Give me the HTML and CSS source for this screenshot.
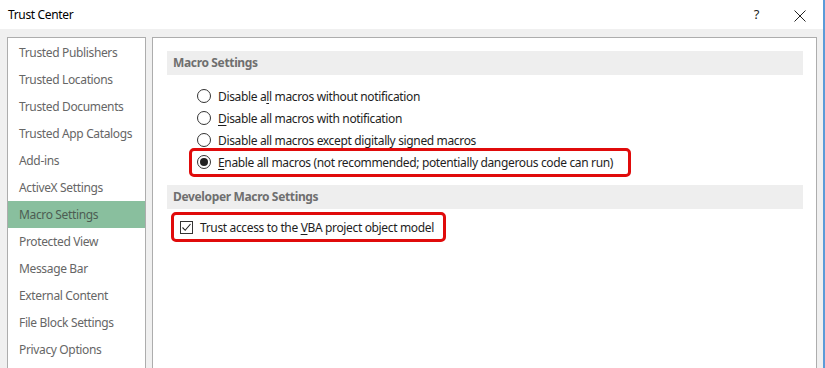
FILE: index.html
```html
<!DOCTYPE html>
<html lang="en">
<head>
<meta charset="utf-8">
<title>Trust Center</title>
<link rel="stylesheet" href="styles.css">
</head>
<body>
<div class="window">
  <div class="titlebar">
    <span class="title">Trust Center</span>
    <div class="title-actions">
      <span class="help">?</span>
      <svg class="close" width="12" height="12" viewBox="0 0 12 12"><path d="M0.5 0.5 L11.5 11.5 M11.5 0.5 L0.5 11.5" stroke="#222" stroke-width="1" fill="none"/></svg>
    </div>
  </div>
  <div class="content">
    <ul class="nav">
      <li>Trusted Publishers</li>
      <li>Trusted Locations</li>
      <li>Trusted Documents</li>
      <li>Trusted App Catalogs</li>
      <li>Add-ins</li>
      <li>ActiveX Settings</li>
      <li class="active">Macro Settings</li>
      <li>Protected View</li>
      <li>Message Bar</li>
      <li>External Content</li>
      <li>File Block Settings</li>
      <li>Privacy Options</li>
    </ul>
    <div class="main">
      <div class="section-head">Macro Settings</div>
      <div class="options">
        <div class="opt"><span class="radio"></span><span>Disable a<u>l</u>l macros without notification</span></div>
        <div class="opt"><span class="radio"></span><span><u>D</u>isable all macros with notification</span></div>
        <div class="opt"><span class="radio"></span><span>Disable all macros except di<u>g</u>itally signed macros</span></div>
        <div class="opt highlight hl-radio"><span class="radio checked"></span><span><u>E</u>nable all macros (not recommended; potentially dangerous code can run)</span></div>
      </div>
      <div class="section-head dev">Developer Macro Settings</div>
      <div class="options check-opts">
        <div class="opt highlight hl-check"><span class="checkbox"><svg width="11" height="11" viewBox="0 0 11 11"><path d="M1.5 5.5 L4.2 8.3 L9.5 2" stroke="#222" stroke-width="1.1" fill="none"/></svg></span><span>Trust access to the <u>V</u>BA project object model</span></div>
      </div>
    </div>
  </div>
</div>
</body>
</html>
```

FILE: styles.css
```css
* { box-sizing: border-box; }
html, body { margin: 0; padding: 0; }
body {
  width: 825px;
  height: 368px;
  overflow: hidden;
  font-family: "Noto Sans", "Open Sans", sans-serif;
  font-size: 12px;
  letter-spacing: -0.35px;
  color: #1e1e1e;
  background: #f0f0f0;
}
.window {
  width: 825px;
  height: 368px;
  display: flex;
  flex-direction: column;
  border-right: 2px solid #5b9bd8;
  background: #f0f0f0;
}
.titlebar {
  height: 29px;
  flex: none;
  background: #ffffff;
  display: flex;
  align-items: center;
  justify-content: space-between;
  padding-left: 8px;
}
.title { color: #000; font-size: 12px; }
.title-actions {
  display: flex;
  align-items: center;
  gap: 35px;
  padding-right: 17px;
}
.help { font-size: 13px; color: #222; margin-top: -2px; }
.close { display: block; margin-top: 2px; }
.content {
  flex: 1;
  display: flex;
  gap: 6px;
  padding: 8px 6px 0 7px;
  min-height: 0;
}
.nav {
  list-style: none;
  margin: 0;
  padding: 1px 0 0 0;
  width: 139px;
  flex: none;
  background: #fff;
  border: 1px solid #adadad;
  border-bottom: none;
}
.nav li {
  height: 27px;
  line-height: 27px;
  padding-left: 11px;
  color: #666666;
  white-space: nowrap;
}
.nav li.active { background: #89bf9e; color: #4d5d53; }
.main {
  flex: 1;
  background: #fff;
  border: 1px solid #adadad;
  border-bottom: none;
  padding: 13px 13px 0 14px;
}
.section-head {
  height: 24px;
  line-height: 24px;
  background: #eeeeee;
  padding-left: 6px;
  font-weight: bold;
  color: #6f6f6f;
}
.section-head.dev { margin-top: 12px; }
.options {
  margin-top: 10px;
  padding-left: 30px;
  display: flex;
  flex-direction: column;
  align-items: flex-start;
}
.check-opts { margin-top: 7px; padding-left: 13px; }
.opt {
  height: 22px;
  display: flex;
  align-items: center;
  gap: 7px;
  white-space: nowrap;
  position: relative;
}
.opt u { text-decoration-thickness: 1px; text-underline-offset: 2px; }
.radio {
  width: 14px;
  height: 14px;
  border: 1px solid #333;
  border-radius: 50%;
  flex: none;
  display: flex;
  align-items: center;
  justify-content: center;
}
.radio.checked::before {
  content: "";
  width: 8px;
  height: 8px;
  border-radius: 50%;
  background: #222;
}
.checkbox {
  width: 13px;
  height: 13px;
  border: 1px solid #333;
  flex: none;
  display: flex;
  align-items: center;
  justify-content: center;
}
.checkbox svg { display: block; }
.highlight::after {
  content: "";
  position: absolute;
  border: 3px solid #e00b0b;
  border-radius: 5px;
  pointer-events: none;
}
.hl-radio::after { left: -8px; right: -18px; top: -3px; bottom: -4px; }
.hl-check::after { left: -9px; right: -12px; top: -4px; bottom: -4px; }
```
